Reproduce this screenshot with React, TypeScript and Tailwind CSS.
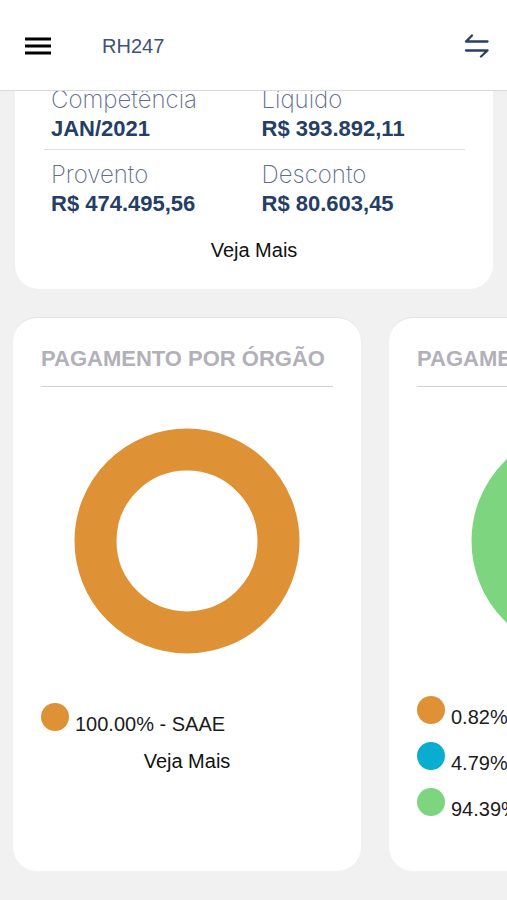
import { clsx } from 'clsx';

type Slice = { label: string; value: number; stroke: string; dot: string };

const totals = [
    [
        { label: 'Competência', value: 'JAN/2021' },
        { label: 'Líquido', value: 'R$ 393.892,11' },
    ],
    [
        { label: 'Provento', value: 'R$ 474.495,56' },
        { label: 'Desconto', value: 'R$ 80.603,45' },
    ],
];

const byOrgan: Slice[] = [
    { label: '100.00% - SAAE', value: 100, stroke: 'stroke-[#de9235]', dot: 'bg-[#de9235]' },
];

const byType: Slice[] = [
    { label: '0.82%', value: 0.82, stroke: 'stroke-[#de9235]', dot: 'bg-[#de9235]' },
    { label: '4.79%', value: 4.79, stroke: 'stroke-[#08adcf]', dot: 'bg-[#08adcf]' },
    { label: '94.39%', value: 94.39, stroke: 'stroke-[#7dd67f]', dot: 'bg-[#7dd67f]' },
];

function Donut({ slices }: { slices: Slice[] }) {
    let start = 0;

    return (
        <svg viewBox="0 0 226 226" className="mx-auto mt-[41px] block size-[226px] -rotate-90" aria-hidden="true">
            {slices.map((slice) => {
                const offset = -start;
                start += slice.value;

                return (
                    <circle
                        key={slice.label}
                        cx="113"
                        cy="113"
                        r="91.5"
                        fill="none"
                        strokeWidth="42"
                        pathLength={100}
                        strokeDasharray={`${slice.value} 100`}
                        strokeDashoffset={offset}
                        className={slice.stroke}
                    />
                );
            })}
        </svg>
    );
}

type ChartCardProps = { title: string; slices: Slice[]; width: string; more?: boolean };

function ChartCard({ title, slices, width, more }: ChartCardProps) {
    return (
        <section className={clsx('shrink-0 rounded-3xl border-t border-[#e4e4e4] bg-white px-7 pt-[25px]', width)}>
            <h2 className="border-b border-[#cfd1d1] pb-[11px] text-[22px] leading-8 font-bold whitespace-nowrap text-[#b2b0b9]">
                {title}
            </h2>
            <Donut slices={slices} />
            <ul className={clsx('flex flex-col', more ? 'mt-[49px]' : 'mt-[42px] gap-3')}>
                {slices.map((slice) => (
                    <li key={slice.label} className="flex h-[34px] items-baseline gap-[6px]">
                        <span className={clsx('size-7 shrink-0 rounded-full', slice.dot)} />
                        <span className="text-xl leading-6 whitespace-nowrap text-[#1c1c1c]">{slice.label}</span>
                    </li>
                ))}
            </ul>
            {more && (
                <button type="button" className="mx-auto mt-3 block text-xl leading-6 text-[#111111]">
                    Veja Mais
                </button>
            )}
        </section>
    );
}

export default function App() {
    return (
        <div className="min-h-screen overflow-hidden bg-[#f1f1f1] font-['Liberation_Sans',Arial,sans-serif]">
            <header className="relative z-10 flex h-[91px] items-center border-b border-[#d9d9d9] bg-white pt-0.5 pr-[18px] pl-[25px]">
                <button type="button" aria-label="Menu" className="text-black">
                    <svg width="26" height="18" viewBox="0 0 26 18" stroke="currentColor" strokeWidth="3">
                        <path d="M0 2h26M0 9h26M0 16h26" />
                    </svg>
                </button>
                <h1 className="ml-[51px] text-xl leading-6 text-[#405276]">RH247</h1>
                <button type="button" aria-label="Trocar" className="ml-auto text-[#263f68]">
                    <svg
                        width="25"
                        height="24"
                        viewBox="0 0 25 24"
                        fill="none"
                        stroke="currentColor"
                        strokeWidth="2.3"
                        strokeLinecap="round"
                        strokeLinejoin="round"
                    >
                        <path d="M23.5 7.5H2L8 1.5M2 16.5h21.5L17 22.5" />
                    </svg>
                </button>
            </header>

            <main>
                <section className="-mt-5 mr-[14px] ml-[15px] rounded-b-3xl bg-white px-7 pt-3 pb-[27px]">
                    {totals.map((row, i) => (
                        <dl
                            key={i}
                            className={clsx('ml-px grid grid-cols-2', i === 0 ? 'border-b border-[#dedede]' : 'pt-2')}
                        >
                            {row.map((item) => (
                                <div key={item.label} className="h-[66px] pl-[7px]">
                                    <dt className="font-['Inter',sans-serif] text-2xl leading-[34px] font-extralight text-[#5f6d8e] [font-optical-sizing:none]">
                                        {item.label}
                                    </dt>
                                    <dd className="text-[22px] leading-6 font-bold text-[#243e66]">{item.value}</dd>
                                </div>
                            ))}
                        </dl>
                    ))}
                    <button type="button" className="mx-auto mt-[14px] block text-xl leading-6 text-[#111111]">
                        Veja Mais
                    </button>
                </section>

                <div className="mt-7 flex min-h-[554px] gap-7 overflow-hidden pl-[13px]">
                    <ChartCard title="PAGAMENTO POR ÓRGÃO" slices={byOrgan} width="w-[348px]" more />
                    <ChartCard title="PAGAMENTO" slices={byType} width="w-[390px]" />
                </div>
            </main>
        </div>
    );
}
